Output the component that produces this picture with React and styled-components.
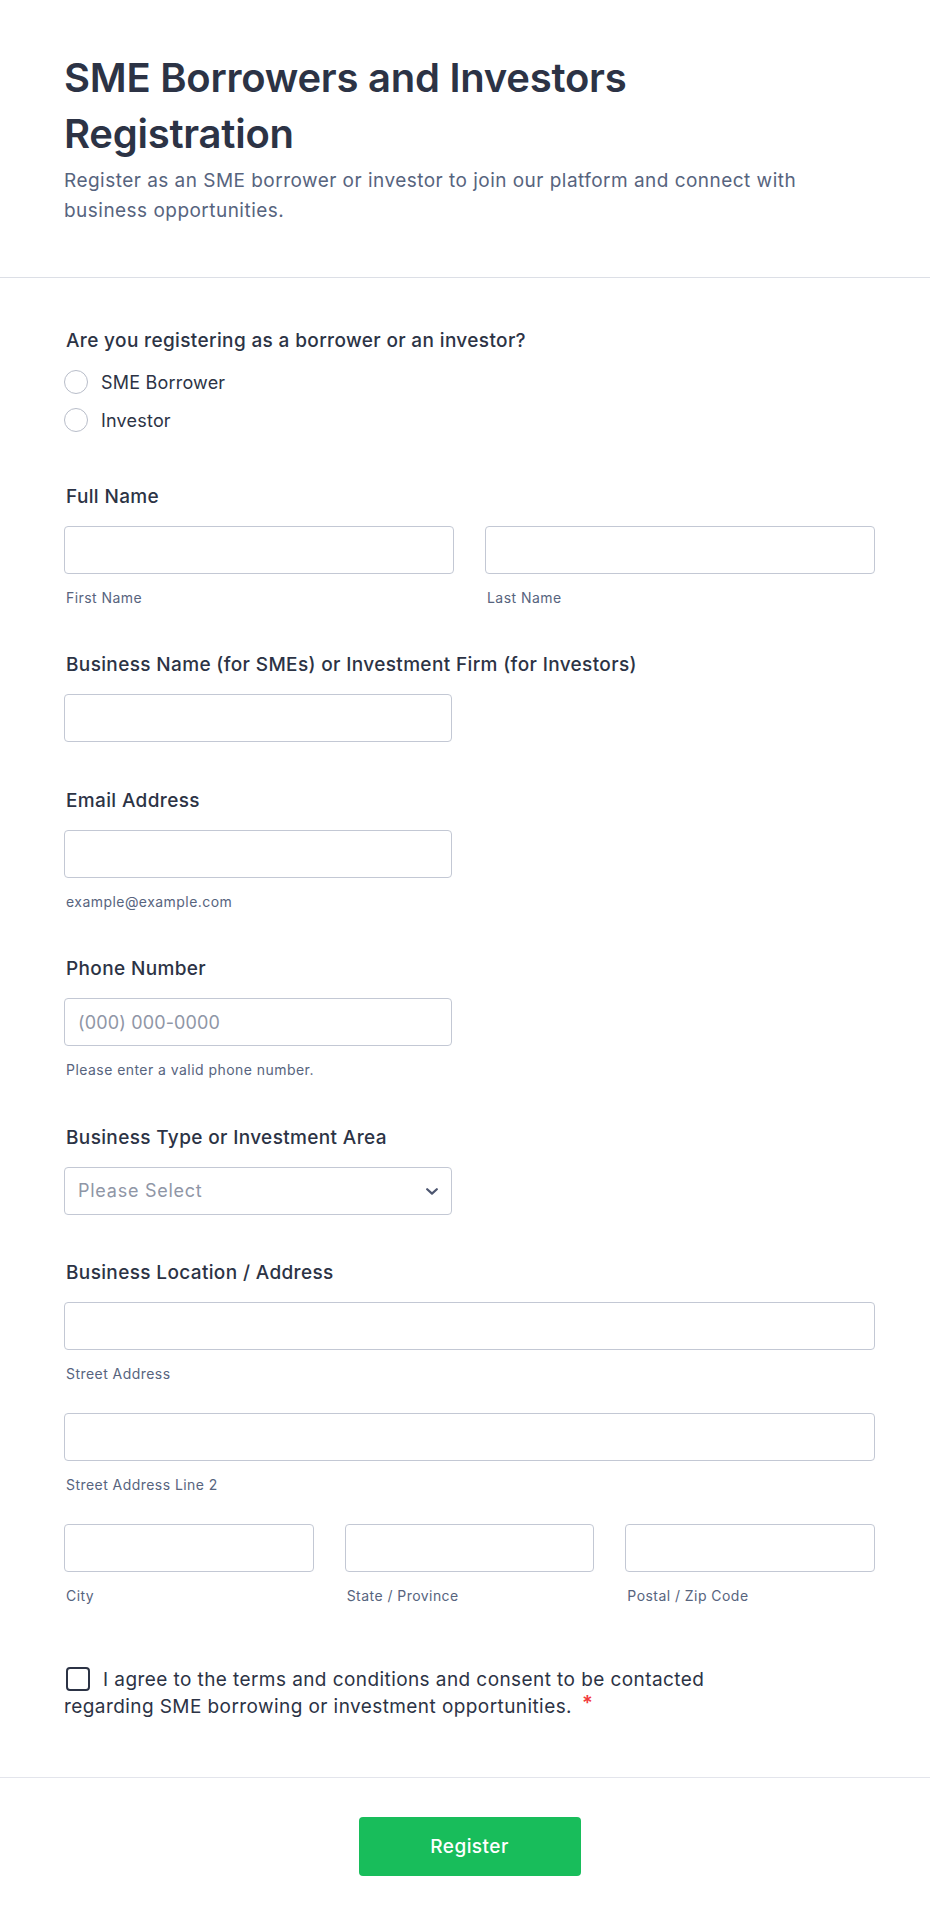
import React from "react";
import styled, { createGlobalStyle } from "styled-components";

const GlobalStyle = createGlobalStyle`
  * { box-sizing: border-box; }
  html, body { margin: 0; padding: 0; background: #ffffff; }
  body {
    font-family: Inter, "Noto Sans", "Liberation Sans", sans-serif;
    color: #2c3345;
  }
`;

const Page = styled.main`
  width: 930px;
  background: #ffffff;
`;

const Header = styled.header`
  padding: 50px 55px 51px 64px;
  border-bottom: 1px solid #dcdfe6;
`;

const Title = styled.h1`
  margin: 0;
  max-width: 765px;
  font-size: 40px;
  line-height: 56px;
  font-weight: 600;
  letter-spacing: -0.25px;
  color: #2c3345;
`;

const Subtitle = styled.p`
  margin: 4px 0 0;
  max-width: 765px;
  font-size: 19px;
  line-height: 30px;
  letter-spacing: 0.47px;
  color: #57647e;
`;

const Body = styled.section`
  display: flex;
  flex-direction: column;
  gap: 46.5px;
  padding: 51px 55px 57px 64px;
`;

const Field = styled.div`
  display: flex;
  flex-direction: column;
  padding-bottom: ${(p) => p.$extraBottom || 0}px;
  padding-top: ${(p) => p.$extraTop || 0}px;
`;

const Label = styled.label`
  display: block;
  font-size: 19px;
  line-height: 24px;
  font-weight: 500;
  letter-spacing: 0.36px;
  color: #2c3345;
  padding-left: 2px;
`;

const OptionList = styled.div`
  display: flex;
  flex-direction: column;
  gap: 14px;
  margin-top: 17px;
`;

const Option = styled.label`
  display: flex;
  align-items: center;
  gap: 13px;
  height: 24px;
  font-size: 18px;
  letter-spacing: 0.2px;
  color: #2c3345;
  cursor: pointer;
`;

const RadioCircle = styled.span`
  width: 24px;
  height: 24px;
  border-radius: 50%;
  border: 1px solid #b8bdc9;
  background: #ffffff;
  flex: none;
`;

const Control = styled.div`
  margin-top: 17px;
  display: grid;
  grid-template-columns: ${(p) => p.$cols || "388px"};
  column-gap: 31px;
  row-gap: 30px;
`;

const Cell = styled.div`
  display: flex;
  flex-direction: column;
  grid-column: ${(p) => (p.$wide ? "1 / -1" : "auto")};
`;

const TextInput = styled.input`
  width: 100%;
  height: 48px;
  border: 1px solid #c3c8d4;
  border-radius: 4px;
  background: #ffffff;
  padding: 0 13px;
  font-family: inherit;
  font-size: 18px;
  letter-spacing: 0.15px;
  color: #2c3345;
  outline: none;
  &::placeholder {
    color: #8f96a6;
  }
`;

const SubLabel = styled.span`
  margin-top: 15px;
  padding-left: 2px;
  font-size: 14px;
  line-height: 18px;
  letter-spacing: 0.45px;
  color: #57647e;
`;

const SelectWrap = styled.div`
  position: relative;
  width: 100%;
`;

const Select = styled.select`
  width: 100%;
  height: 48px;
  appearance: none;
  -webkit-appearance: none;
  border: 1px solid #c3c8d4;
  border-radius: 4px;
  background: #ffffff;
  padding: 0 40px 0 13px;
  font-family: inherit;
  font-size: 18px;
  letter-spacing: 0.75px;
  color: #8f96a6;
  outline: none;
`;

const Chevron = styled.svg`
  position: absolute;
  right: 14px;
  top: 50%;
  margin-top: -3px;
  pointer-events: none;
`;

const CheckText = styled.p`
  margin: 0;
  max-width: 690px;
  font-size: 19px;
  line-height: 27px;
  letter-spacing: 0.42px;
  color: #2c3345;
`;

const CheckBox = styled.span`
  display: inline-block;
  width: 24px;
  height: 24px;
  margin: 0 13px 0 2px;
  vertical-align: -5px;
  border: 2px solid #2c3345;
  border-radius: 4px;
  background: #ffffff;
`;

const Required = styled.span`
  margin-left: 10px;
  color: #f23a3c;
  vertical-align: 3px;
  font-size: 20px;
  line-height: 20px;
  font-weight: 600;
`;

const Footer = styled.footer`
  display: flex;
  justify-content: center;
  padding: 39px 55px 48px 64px;
  border-top: 1px solid #e3e5ec;
`;

const SubmitButton = styled.button`
  width: 222px;
  height: 59px;
  border: none;
  border-radius: 4px;
  background: #18bd5b;
  color: #ffffff;
  font-family: inherit;
  font-size: 19px;
  font-weight: 500;
  letter-spacing: 0.45px;
  cursor: pointer;
`;

function TextField({ label, placeholder, sub }) {
  return (
    <Field>
      <Label>{label}</Label>
      <Control>
        <Cell>
          <TextInput type="text" placeholder={placeholder} />
          {sub && <SubLabel>{sub}</SubLabel>}
        </Cell>
      </Control>
    </Field>
  );
}

export default function App() {
  return (
    <>
      <GlobalStyle />
      <Page>
        <Header>
          <Title>SME Borrowers and Investors Registration</Title>
          <Subtitle>
            Register as an SME borrower or investor to join our platform and
            connect with business opportunities.
          </Subtitle>
        </Header>

        <Body>
          <Field $extraBottom={6}>
            <Label>Are you registering as a borrower or an investor?</Label>
            <OptionList>
              <Option>
                <RadioCircle />
                SME Borrower
              </Option>
              <Option>
                <RadioCircle />
                Investor
              </Option>
            </OptionList>
          </Field>

          <Field>
            <Label>Full Name</Label>
            <Control $cols="390px 390px">
              <Cell>
                <TextInput type="text" />
                <SubLabel>First Name</SubLabel>
              </Cell>
              <Cell>
                <TextInput type="text" />
                <SubLabel>Last Name</SubLabel>
              </Cell>
            </Control>
          </Field>

          <TextField label="Business Name (for SMEs) or Investment Firm (for Investors)" />
          <TextField label="Email Address" sub="example@example.com" />
          <TextField
            label="Phone Number"
            placeholder="(000) 000-0000"
            sub="Please enter a valid phone number."
          />

          <Field>
            <Label>Business Type or Investment Area</Label>
            <Control>
              <SelectWrap>
                <Select defaultValue="">
                  <option value="">Please Select</option>
                </Select>
                <Chevron width="12" height="7" viewBox="0 0 12 7" fill="none">
                  <path
                    d="M1.2 1.2 6 5.6l4.8-4.4"
                    stroke="#4d5670"
                    strokeWidth="2.2"
                    strokeLinecap="round"
                    strokeLinejoin="round"
                  />
                </Chevron>
              </SelectWrap>
            </Control>
          </Field>

          <Field>
            <Label>Business Location / Address</Label>
            <Control $cols="1fr 1fr 1fr">
              <Cell $wide>
                <TextInput type="text" />
                <SubLabel>Street Address</SubLabel>
              </Cell>
              <Cell $wide>
                <TextInput type="text" />
                <SubLabel>Street Address Line 2</SubLabel>
              </Cell>
              <Cell>
                <TextInput type="text" />
                <SubLabel>City</SubLabel>
              </Cell>
              <Cell>
                <TextInput type="text" />
                <SubLabel>State / Province</SubLabel>
              </Cell>
              <Cell>
                <TextInput type="text" />
                <SubLabel>Postal / Zip Code</SubLabel>
              </Cell>
            </Control>
          </Field>

          <Field $extraTop={14}>
            <CheckText>
              <CheckBox />I agree to the terms and conditions and consent to be
              contacted regarding SME borrowing or investment opportunities.
              <Required>*</Required>
            </CheckText>
          </Field>
        </Body>

        <Footer>
          <SubmitButton type="button">Register</SubmitButton>
        </Footer>
      </Page>
    </>
  );
}
